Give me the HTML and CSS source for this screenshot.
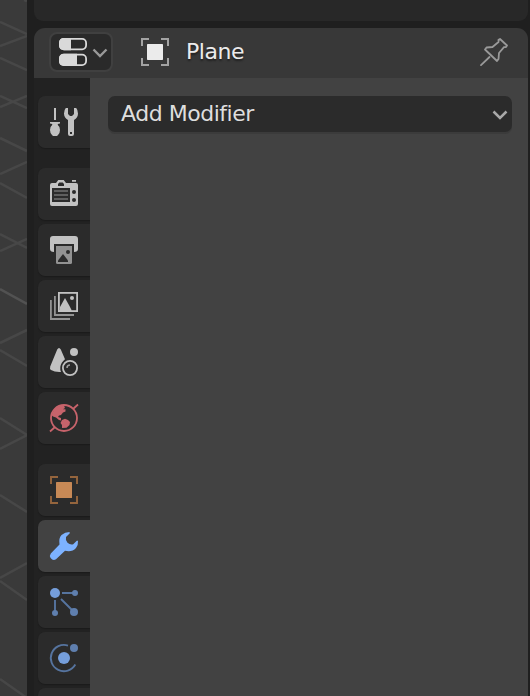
FILE: index.html
```html
<!DOCTYPE html>
<html lang="en">
<head>
<meta charset="utf-8">
<title>Properties</title>
<link rel="stylesheet" href="styles.css">
</head>
<body>
<div class="workspace">
  <aside class="viewport">
    <svg width="27" height="696" viewBox="0 0 27 696" fill="none" stroke="#474747" stroke-width="2.5">
      <path d="M0 22L27 34M0 46L27 36M0 58L27 70M0 96L27 108M0 107L27 96M0 138L27 151M0 174L27 162M0 183L27 198M0 234L27 248M0 251L27 239M0 343L27 330M0 350L27 366M0 418L27 435M0 449L27 435M0 495L27 512M0 578L27 563M0 581L27 600M0 679L27 698M24 0L27 1"/>
      <path d="M0 289L27 304" stroke="#525252"/>
    </svg>
  </aside>
  <main class="editors">
    <section class="outliner"></section>
    <section class="properties">
      <header class="header">
        <button class="editor-type">
          <svg width="28" height="28" viewBox="0 0 28 28"><rect x=".9" y=".9" width="26.2" height="10.4" rx="4" fill="#2a2a2a" stroke="#d9d9d9" stroke-width="1.8"/><path d="M12 0H5Q0 0 0 5V7.3Q0 12.2 5 12.2H12Z" fill="#d9d9d9"/><rect x=".9" y="16.7" width="26.2" height="10.4" rx="4" fill="#2a2a2a" stroke="#d9d9d9" stroke-width="1.8"/><path d="M18 15.8H5Q0 15.8 0 20.8V23.1Q0 28 5 28H18Z" fill="#d9d9d9"/></svg>
          <svg class="chevron" width="16" height="10" viewBox="0 0 16 10"><path d="M1.5 1.5L8 8L14.5 1.5" fill="none" stroke="#999" stroke-width="2.4"/></svg>
        </button>
        <svg class="object-icon" width="28" height="28" viewBox="0 0 28 28"><path d="M1 8V1H8M20 1H27V8M27 20V27H20M8 27H1V20" fill="none" stroke="#a3a3a3" stroke-width="2"/><rect x="6" y="6" width="16" height="16" rx=".7" fill="#ebebeb"/></svg>
        <span class="name">Plane</span>
        <svg class="pin" width="28" height="28" viewBox="0 0 28 28" fill="none" stroke="#999" stroke-width="1.8" stroke-linejoin="round" stroke-linecap="round"><path d="M20 1L27 7.5L26 9L24 9.2L19 15L18.5 21L17 23L5 11.5L6.5 9.5L12.5 9L18.5 4V1.8ZM9.5 19L1 27.2"/></svg>
      </header>
      <div class="body">
        <nav class="tabs">
          <a class="tab"><svg viewBox="0 0 28 28" fill="#c2c2c2"><path d="M4 0H6V12H4ZM0 14H10V15.4L7.8 16V17Q10 18.5 10 22Q10 25 8 27L7 28H3L2 27Q0 25 0 22Q0 18.5 2.2 17V16L0 15.4Z"/><path fill-rule="evenodd" d="M15.8 0H18V6L20 8H22L24 6V0H26.2Q28 2 28 5.5Q28 9.5 24 12V26Q24 28 22 28H20Q18 28 18 26V12Q14 9.5 14 5.5Q14 2 15.8 0ZM20 24V26H22V24Z"/></svg></a>
          <a class="tab group"><svg viewBox="0 0 28 28"><path d="M2 3H6L8.3 0H13.7L16 3H26Q28 3 28 5V24Q28 26 26 26H2Q0 26 0 24V5Q0 3 2 3ZM22 0H26V1.7H22Z" fill="#c2c2c2"/><path d="M8 6V4L9.3 2.5H12.7L14 4V6ZM2 8H20V22H2Z" fill="#2b2b2b"/><path d="M4 11H18M4 15H18M4 19H18" stroke="#707070" stroke-width="1.7"/><circle cx="24" cy="12" r="2" fill="#2b2b2b"/><circle cx="24" cy="20" r="2" fill="#2b2b2b"/></svg></a>
          <a class="tab"><svg viewBox="0 0 28 28"><path d="M3 0H25Q28 0 28 3V13Q28 16 24 16V10H4V16Q0 16 0 13V3Q0 0 3 0Z" fill="#c2c2c2"/><path d="M4 8H24V10H4Z" fill="#2b2b2b"/><path d="M6 10H22V26.5Q22 28 20.5 28H7.5Q6 28 6 26.5Z" fill="#929292"/><path d="M8 26V24.5L13 18L18 24.5V26Z" fill="#2b2b2b"/><circle cx="18" cy="16" r="2" fill="#2b2b2b"/></svg></a>
          <a class="tab"><svg viewBox="0 0 28 28"><path d="M.9 8V27H20M4.9 4V23H24" fill="none" stroke="#929292" stroke-width="1.8"/><rect x="8.9" y=".9" width="18.2" height="18.2" fill="none" stroke="#c2c2c2" stroke-width="1.8"/><path d="M10 18V15L15 6L19.5 14L21.5 18V19H9Z" fill="#c2c2c2"/><circle cx="22" cy="6" r="2" fill="#c2c2c2"/></svg></a>
          <a class="tab"><svg viewBox="0 0 28 28"><path d="M9 0Q10 0 10.8 1.5L15 11.3Q11 14.5 10.3 19Q10 22 11 24Q5 24.4 1 22Q-.5 21 .2 18.5L7.2 1.5Q8 0 9 0Z" fill="#c2c2c2"/><circle cx="24" cy="4" r="4" fill="#c2c2c2"/><circle cx="20" cy="20" r="7.1" fill="none" stroke="#c2c2c2" stroke-width="1.8"/><path d="M17 20Q17 17 20 17" fill="none" stroke="#a0a0a0" stroke-width="1.5"/></svg></a>
          <a class="tab"><svg viewBox="0 0 28 28"><circle cx="14" cy="14" r="13" fill="none" stroke="#c7636b" stroke-width="1.8"/><path d="M0 27.5L5 23M23 5L28 .5" stroke="#c7636b" stroke-width="1.8"/><path d="M4 6Q8 1 14 1.5L15 4L13 5.2H15.5V7.5L13 8.5L11 11L9 11.5L8 13L11 14V16.5L9 16L6 13.5L3 12.5L1.5 11ZM12 16L15 14.8L18 16L20 18L19.5 21L16.5 23.8L12 24V21L10.5 19Z" fill="#c7636b"/></svg></a>
          <a class="tab group"><svg viewBox="0 0 28 28"><path d="M1 8V1H8M20 1H27V8M27 20V27H20M8 27H1V20" fill="none" stroke="#95653d" stroke-width="1.9"/><rect x="6" y="6" width="16" height="16" rx=".5" fill="#c78956"/></svg></a>
          <a class="tab active"><svg viewBox="0 0 28 28"><path d="M19.5 0Q15 0 11.5 3Q8.5 6 9.5 12.5L.8 21.5Q-.8 23.6 .6 26Q3 29 6 27.2L15 18.8Q22 20.5 26 16Q28.4 13 28 8.8H26.8L23.2 12.3Q20 13 17.5 10.8Q15.2 8 16 5L19.8 1.2Z" fill="#7db2ff"/></svg></a>
          <a class="tab"><svg viewBox="0 0 28 28"><path d="M12 5H23M5 12V23M11 11L22 22" stroke="#56749f" stroke-width="1.9"/><circle cx="5" cy="5" r="5" fill="#759edb"/><g fill="#5f7fae"><circle cx="25" cy="5" r="3"/><circle cx="5" cy="25" r="3"/><circle cx="24" cy="24" r="4"/></g></svg></a>
          <a class="tab"><svg viewBox="0 0 28 28"><path d="M18 1.6A13.1 13.1 0 1 0 25.3 20.5" fill="none" stroke="#56749f" stroke-width="1.9"/><circle cx="14" cy="14" r="6" fill="#759edb"/><circle cx="24" cy="4" r="4" fill="#5f7fae"/></svg></a>
          <a class="tab"></a>
        </nav>
        <div class="content">
          <button class="dropdown">
            <span>Add Modifier</span>
            <svg class="chevron" width="16" height="10" viewBox="0 0 16 10"><path d="M1.5 1.5L8 8L14.5 1.5" fill="none" stroke="#a8a8a8" stroke-width="2.5"/></svg>
          </button>
        </div>
      </div>
    </section>
  </main>
</div>
</body>
</html>
```
FILE: styles.css
```css
* { box-sizing: border-box; }
body { margin: 0; background: #1f1f1f; font-family: "DejaVu Sans", sans-serif; }
svg { display: block; flex-shrink: 0; }
button { border: 0; margin: 0; font: inherit; color: inherit; }
.workspace { display: flex; height: 696px; overflow: hidden; }
.viewport { width: 27px; flex-shrink: 0; background: #3a3a3a; }
.editors { flex: 1; display: flex; flex-direction: column; gap: 7px; padding: 0 2px 0 7px; min-width: 0; }
.outliner { height: 21px; flex-shrink: 0; background: #282828; border-radius: 0 0 9px 9px; }
.properties { flex: 1; min-height: 0; display: flex; flex-direction: column; border-radius: 11px 11px 0 0; overflow: hidden; }
.header { height: 50px; flex-shrink: 0; display: flex; align-items: center; padding: 0 20px 0 15px; background: #383838; color: #ebebeb; }
.editor-type { width: 64px; height: 40px; padding: 0 3px 0 8px; margin-top: -2px; display: flex; align-items: center; justify-content: space-between; background: #2a2a2a; border: 2px solid #404040; border-radius: 8px; }
.editor-type .chevron { margin-top: 2px; }
.object-icon { margin: -2px 17px 0 28px; }
.name, .dropdown { font-size: 22px; line-height: 26px; letter-spacing: -.48px; }
.name { margin-top: -3px; text-shadow: 0 2px 2px rgba(0,0,0,.45); }
.pin { margin: -2px 0 0 auto; }
.body { flex: 1; min-height: 0; display: flex; }
.tabs { width: 56px; flex-shrink: 0; display: flex; flex-direction: column; gap: 4px; padding: 18px 0 0 4px; background: #222; }
.tab { height: 52px; flex-shrink: 0; display: flex; align-items: center; justify-content: center; background: #2b2b2b; border-radius: 7px 0 0 7px; box-shadow: 0 1px 1px #1b1b1b; }
.tab svg { width: 28px; height: 28px; overflow: visible; }
.group { margin-top: 16px; }
.active { background: #424242; }
.content { flex: 1; padding: 18px 16px 0 18px; background: #424242; }
.dropdown { width: 100%; height: 36px; padding: 0 4px 0 13px; display: flex; align-items: center; justify-content: space-between; background: #2b2b2b; color: #dedede; border-radius: 7px; box-shadow: 0 2px 0 #3b3b3b; }
.dropdown span { margin-top: 0; }
.dropdown .chevron { margin-top: 2px; }
```
